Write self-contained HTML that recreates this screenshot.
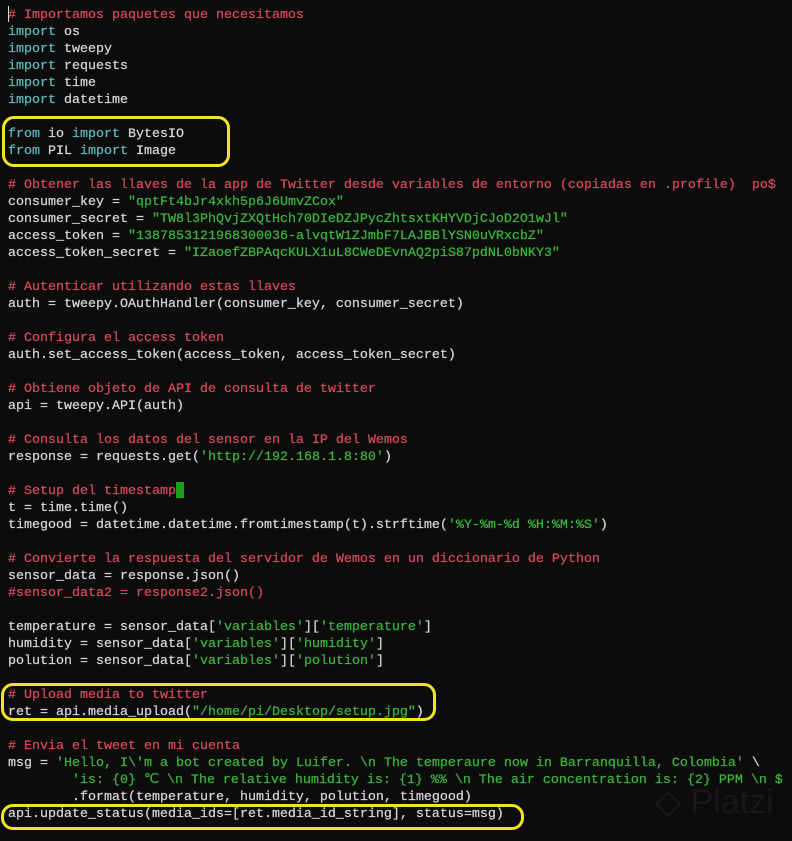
<!DOCTYPE html>
<html><head><meta charset="utf-8"><style>
html,body{margin:0;padding:0;background:#0c0c0c;width:792px;height:841px;overflow:hidden;position:relative}
pre{margin:0;position:absolute;left:8px;top:7px;font-family:"Liberation Mono",monospace;font-size:13.33px;line-height:17px;color:#d6d6d6;white-space:pre;-webkit-text-stroke:0.25px currentColor}
.c{color:#d5495d}.s{color:#3cb53c}.k{color:#5ebaba}
.box{position:absolute;border:3px solid #f2e421;border-radius:12px;box-sizing:border-box}
.cur{position:absolute;background:#16a116}
</style></head><body>
<pre><span class="c"># Importamos paquetes que necesitamos</span>
<span class="k">import</span> os
<span class="k">import</span> tweepy
<span class="k">import</span> requests
<span class="k">import</span> time
<span class="k">import</span> datetime

<span class="k">from</span> io <span class="k">import</span> BytesIO
<span class="k">from</span> PIL <span class="k">import</span> Image

<span class="c"># Obtener las llaves de la app de Twitter desde variables de entorno (copiadas en .profile)  po$</span>
consumer_key = <span class="s">"qptFt4bJr4xkh5p6J6UmvZCox"</span>
consumer_secret = <span class="s">"TW8l3PhQvjZXQtHch70DIeDZJPycZhtsxtKHYVDjCJoD2O1wJl"</span>
access_token = <span class="s">"1387853121968300036-alvqtW1ZJmbF7LAJBBlYSN0uVRxcbZ"</span>
access_token_secret = <span class="s">"IZaoefZBPAqcKULX1uL8CWeDEvnAQ2piS87pdNL0bNKY3"</span>

<span class="c"># Autenticar utilizando estas llaves</span>
auth = tweepy.OAuthHandler(consumer_key, consumer_secret)

<span class="c"># Configura el access token</span>
auth.set_access_token(access_token, access_token_secret)

<span class="c"># Obtiene objeto de API de consulta de twitter</span>
api = tweepy.API(auth)

<span class="c"># Consulta los datos del sensor en la IP del Wemos</span>
response = requests.get(<span class="s">'http://192.168.1.8:80'</span>)

<span class="c"># Setup del timestamp</span>
t = time.time()
timegood = datetime.datetime.fromtimestamp(t).strftime(<span class="s">'%Y-%m-%d %H:%M:%S'</span>)

<span class="c"># Convierte la respuesta del servidor de Wemos en un diccionario de Python</span>
sensor_data = response.json()
<span class="c">#sensor_data2 = response2.json()</span>

temperature = sensor_data[<span class="s">'variables'</span>][<span class="s">'temperature'</span>]
humidity = sensor_data[<span class="s">'variables'</span>][<span class="s">'humidity'</span>]
polution = sensor_data[<span class="s">'variables'</span>][<span class="s">'polution'</span>]

<span class="c"># Upload media to twitter</span>
ret = api.media_upload(<span class="s">"/home/pi/Desktop/setup.jpg"</span>)

<span class="c"># Envia el tweet en mi cuenta</span>
msg = <span class="s">'Hello, I\'m a bot created by Luifer. \n The temperaure now in Barranquilla, Colombia'</span> \
        <span class="s">'is: {0} ℃ \n The relative humidity is: {1} %% \n The air concentration is: {2} PPM \n $</span>
        .format(temperature, humidity, polution, timegood)
api.update_status(media_ids=[ret.media_id_string], status=msg)</pre>
<div class="cur" style="left:176px;top:482px;width:8px;height:16px"></div>
<div class="cur" style="left:8px;top:6px;width:1px;height:16px;background:#ddd"></div>
<div class="box" style="left:2px;top:116px;width:228px;height:51px"></div>
<div class="box" style="left:1px;top:683px;width:435px;height:38px"></div>
<div class="box" style="left:1px;top:804px;width:523px;height:26px"></div>
<div style="position:absolute;left:655px;top:782px;font-family:'Liberation Sans',sans-serif;font-size:34px;color:rgba(255,255,255,0.05)">◇ Platzi</div>
</body></html>
